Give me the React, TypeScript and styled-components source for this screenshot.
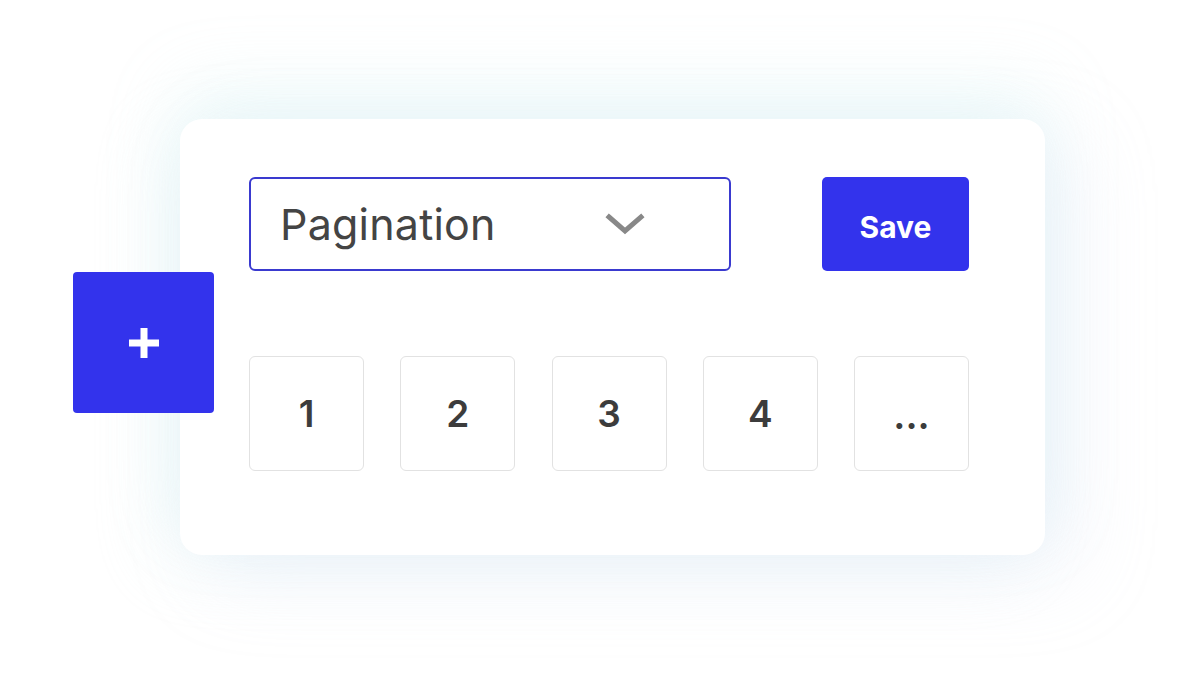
import React from "react";
import styled, { createGlobalStyle } from "styled-components";

const GlobalStyle = createGlobalStyle`
  html, body {
    margin: 0;
    padding: 0;
    background: #ffffff;
    font-family: Inter, "Noto Sans", "Liberation Sans", sans-serif;
  }
`;

const Stage = styled.div`
  width: 1200px;
  height: 674px;
  box-sizing: border-box;
  padding: 119px 0 0 180px;
  overflow: hidden;
  background: #ffffff;
`;

const Card = styled.div`
  position: relative;
  width: 865px;
  height: 436px;
  box-sizing: border-box;
  padding: 58px 76px 0 69px;
  background: #ffffff;
  border-radius: 22px;
  box-shadow:
    0 -30px 70px rgba(195, 238, 240, 0.25),
    30px 20px 80px rgba(210, 220, 245, 0.25),
    -20px 10px 70px rgba(220, 238, 242, 0.3);
  display: flex;
  flex-direction: column;
  gap: 85px;
`;

const AddButton = styled.button`
  position: absolute;
  left: -107px;
  top: 153px;
  width: 141px;
  height: 141px;
  border: none;
  border-radius: 4px;
  background: #3333ec;
  color: #ffffff;
  display: flex;
  align-items: center;
  justify-content: center;
  padding: 0;
  cursor: pointer;
`;

const TopRow = styled.div`
  display: flex;
  justify-content: space-between;
  align-items: center;
`;

const Select = styled.div`
  width: 482px;
  height: 94px;
  box-sizing: border-box;
  border: 2px solid #3a3acf;
  border-radius: 6px;
  display: flex;
  align-items: center;
  padding: 0 84px 0 29px;
  justify-content: space-between;
  color: #444444;
  font-size: 43px;
  font-weight: 400;
  letter-spacing: 0.2px;
`;

const SaveButton = styled.button`
  width: 147px;
  height: 94px;
  border: none;
  border-radius: 5px;
  background: #3333ec;
  color: #ffffff;
  font-family: Inter, "Noto Sans", "Liberation Sans", sans-serif;
  font-size: 30px;
  font-weight: 700;
  padding: 6px 0 0;
  cursor: pointer;
`;

const Pages = styled.div`
  display: flex;
  justify-content: space-between;
`;

const PageButton = styled.button<{ $dots?: boolean }>`
  width: 115px;
  height: 115px;
  box-sizing: border-box;
  background: #ffffff;
  border: 1.5px solid #e2e2e2;
  border-radius: 6px;
  color: #3c3c3c;
  font-family: Inter, "Noto Sans", "Liberation Sans", sans-serif;
  font-size: ${(p) => (p.$dots ? "38px" : "37px")};
  font-weight: 600;
  padding: ${(p) => (p.$dots ? "2px 0 0" : "0")};
  display: flex;
  align-items: center;
  justify-content: center;
  cursor: pointer;
`;

const Chevron = () => (
  <svg width="40" height="26" viewBox="0 0 40 26" fill="none">
    <path d="M4 6 L20 20 L36 6" stroke="#888888" strokeWidth="5" strokeLinecap="square" />
  </svg>
);

const Plus = () => (
  <svg width="30" height="30" viewBox="0 0 30 30">
    <rect x="11.5" y="0" width="7" height="30" fill="#ffffff" />
    <rect x="0" y="11.5" width="30" height="7" fill="#ffffff" />
  </svg>
);

const pages = ["1", "2", "3", "4", "..."];

export default function App() {
  return (
    <>
      <GlobalStyle />
      <Stage>
        <Card>
          <AddButton aria-label="Add">
            <Plus />
          </AddButton>
          <TopRow>
            <Select>
              <span>Pagination</span>
              <Chevron />
            </Select>
            <SaveButton>Save</SaveButton>
          </TopRow>
          <Pages>
            {pages.map((p) => (
              <PageButton key={p} $dots={p === "..."}>
                {p}
              </PageButton>
            ))}
          </Pages>
        </Card>
      </Stage>
    </>
  );
}
